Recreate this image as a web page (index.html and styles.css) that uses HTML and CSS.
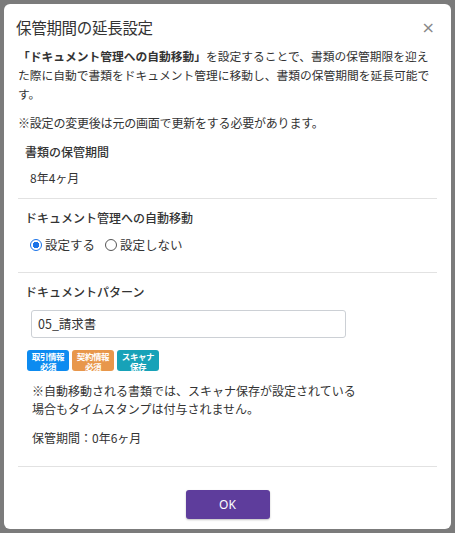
FILE: index.html
```html
<!DOCTYPE html>
<html lang="ja">
<head>
<meta charset="utf-8">
<link rel="stylesheet" href="styles.css">
</head>
<body>
<div class="backdrop">
  <div class="modal">
    <div class="modal-header">
      <h1 class="modal-title">保管期間の延長設定</h1>
      <span class="close">×</span>
    </div>
    <div class="modal-body">
      <p class="desc"><b>「ドキュメント管理への自動移動」</b>を設定することで、書類の保管期限を迎えた際に自動で書類をドキュメント管理に移動し、書類の保管期間を延長可能です。</p>
      <p class="desc note">※設定の変更後は元の画面で更新をする必要があります。</p>

      <div class="section first">
        <div class="label">書類の保管期間</div>
        <div class="value">8年4ヶ月</div>
      </div>

      <div class="section">
        <div class="label">ドキュメント管理への自動移動</div>
        <div class="radios">
          <label class="radio"><span class="dot checked"></span>設定する</label>
          <label class="radio"><span class="dot"></span>設定しない</label>
        </div>
      </div>

      <div class="section">
        <div class="label">ドキュメントパターン</div>
        <div class="input">05_請求書</div>
        <div class="badges">
          <span class="badge blue">取引情報<br>必須</span>
          <span class="badge orange">契約情報<br>必須</span>
          <span class="badge teal">スキャナ<br>保存</span>
        </div>
        <p class="warn">※自動移動される書類では、スキャナ保存が設定されている<br>場合もタイムスタンプは付与されません。</p>
        <p class="period">保管期間：0年6ヶ月</p>
      </div>
    </div>
    <div class="modal-footer">
      <button class="ok">OK</button>
    </div>
  </div>
</div>
</body>
</html>
```

FILE: styles.css
```css
* { box-sizing: border-box; }
html, body {
  margin: 0;
  padding: 0;
  height: 100%;
}
body {
  background: #7b7b7b;
  font-family: "Noto Sans CJK JP", "Noto Sans", sans-serif;
  color: #333;
  overflow: hidden;
}
.backdrop {
  padding: 4px 4px 0 4px;
}
.modal {
  background: #fff;
  border-radius: 6px;
  height: 525px;
  display: flex;
  flex-direction: column;
}
.modal-header {
  display: flex;
  justify-content: space-between;
  align-items: center;
  padding: 12px 16px 0 12px;
  height: 34px;
}
.modal-title {
  margin: 0;
  font-size: 15.5px;
  font-weight: 400;
  letter-spacing: -0.3px;
  color: #333;
  line-height: 20px;
}
.close {
  font-size: 16px;
  color: #888;
  font-family: "DejaVu Sans", sans-serif;
  line-height: 20px;
  margin-top: 2px;
}
.modal-body {
  padding: 8px 14px 0 14px;
  font-size: 12px;
}
.desc {
  margin: 0;
  line-height: 19px;
  color: #333;
  font-size: 11.75px;
}
.desc b { font-weight: 700; }
.note { margin-top: 10px; font-size: 12px; letter-spacing: -0.2px; }
.section {
  border-top: 1px solid #e2e2e2;
  padding: 10px 7px 0 7px;
}
.section.first {
  border-top: none;
  padding-top: 11px;
  padding-bottom: 11px;
}
.label {
  font-size: 12px;
  font-weight: 500;
  line-height: 18px;
  color: #333;
}
.value {
  margin-top: 8px;
  padding-left: 5px;
  line-height: 18px;
}
.radios {
  display: flex;
  gap: 10px;
  margin-top: 9px;
  padding-left: 5px;
  padding-bottom: 18px;
}
.radio {
  display: flex;
  align-items: center;
  gap: 3px;
  line-height: 18px;
  font-size: 12.5px;
}
.dot {
  width: 12px;
  height: 12px;
  border-radius: 50%;
  border: 1px solid #555;
  display: inline-block;
  background: #fff;
}
.dot.checked {
  border: 1.5px solid #1a73e8;
  background: radial-gradient(circle, #1a73e8 0 3px, #fff 3.5px);
}
.input {
  margin-top: 9px;
  margin-left: 6px;
  width: 315px;
  height: 28px;
  border: 1px solid #ccd0d5;
  border-radius: 3px;
  padding: 0 6px;
  line-height: 26px;
  font-size: 12.5px;
}
.badges {
  display: flex;
  gap: 3px;
  margin-top: 12px;
  margin-left: 2px;
}
.badge {
  width: 42px;
  height: 21px;
  border-radius: 3px;
  color: #fff;
  font-size: 8.5px;
  font-weight: 700;
  line-height: 10px;
  letter-spacing: -0.4px;
  text-align: center;
  padding-top: 0.5px;
  overflow: hidden;
}
.blue { background: #0d8bf0; }
.orange { background: #e8974b; }
.teal { background: #17a2b8; }
.warn {
  margin: 11px 0 0 7px;
  line-height: 18px;
}
.period {
  margin: 11px 0 0 7px;
  line-height: 18px;
  padding-bottom: 19px;
}
.modal-footer {
  margin: 0 14px;
  border-top: 1px solid #e2e2e2;
  display: flex;
  justify-content: center;
  padding-top: 23px;
}
.ok {
  width: 84px;
  height: 29px;
  border: none;
  border-radius: 3px;
  background: #5e3d9c;
  color: #fff;
  font-family: "Noto Sans", sans-serif;
  font-size: 12px;
  box-shadow: 0 1px 2px rgba(0,0,0,0.25);
}
```
